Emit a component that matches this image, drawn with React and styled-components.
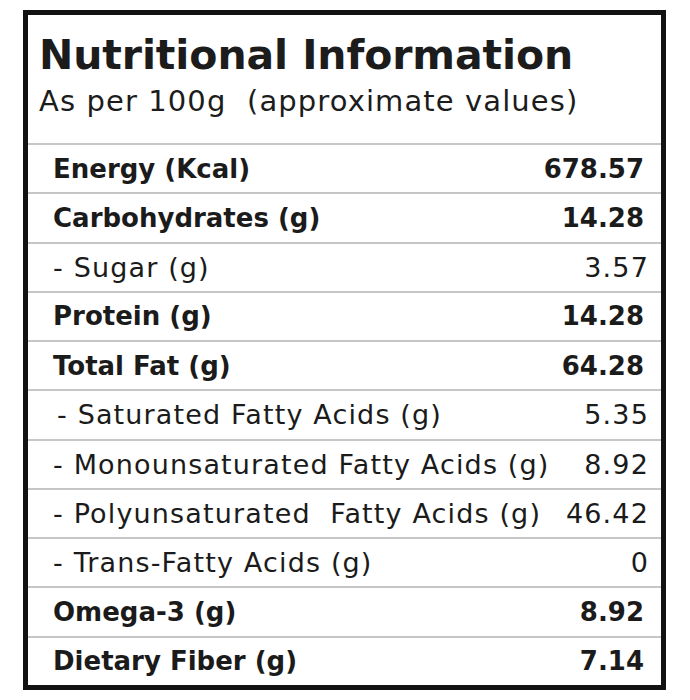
import React from "react";
import styled, { createGlobalStyle } from "styled-components";

const GlobalStyle = createGlobalStyle`
  html, body {
    margin: 0;
    padding: 0;
    background: #ffffff;
  }
  body {
    font-family: "DejaVu Sans", "Liberation Sans", sans-serif;
    color: #1b1b1b;
  }
`;

const Page = styled.div`
  width: 690px;
  height: 700px;
  padding: 10px 0 0 23px;
  box-sizing: border-box;
`;

const Card = styled.section`
  width: 643px;
  height: 680px;
  box-sizing: border-box;
  border: 5px solid #121212;
  display: flex;
  flex-direction: column;
`;

const Header = styled.header`
  height: 128px;
  box-sizing: border-box;
  padding: 19px 0 0 11px;
`;

const Title = styled.h1`
  margin: 0;
  font-size: 41px;
  line-height: 42px;
  font-weight: 700;
  letter-spacing: -0.1px;
  color: #1c1c1c;
`;

const Subtitle = styled.p`
  margin: 9px 0 0;
  font-size: 29px;
  line-height: 32px;
  font-weight: 400;
  letter-spacing: 1.1px;
  white-space: pre;
  color: #1c1c1c;
`;

const Row = styled.div`
  flex: 1;
  display: flex;
  align-items: center;
  justify-content: space-between;
  border-top: 2px solid #c6c6c6;
  padding: 0 ${(props) => (props.$sub ? "13px" : "17px")} 0
    ${(props) => 25 + (props.$indent || 0)}px;
  font-size: ${(props) => (props.$sub ? "27px" : "26px")};
  font-weight: ${(props) => (props.$sub ? 400 : 700)};
  letter-spacing: ${(props) => (props.$sub ? "1.15px" : "0")};
  color: #1b1b1b;
`;

const Label = styled.span`
  white-space: pre;
`;

const Value = styled.span`
  margin-right: ${(props) => (props.$sub ? "-1px" : "0")};
`;

const rows = [
  { label: "Energy (Kcal)", value: "678.57" },
  { label: "Carbohydrates (g)", value: "14.28" },
  { label: "- Sugar (g)", value: "3.57", sub: true },
  { label: "Protein (g)", value: "14.28" },
  { label: "Total Fat (g)", value: "64.28" },
  { label: "- Saturated Fatty Acids (g)", value: "5.35", sub: true, indent: 4 },
  { label: "- Monounsaturated Fatty Acids (g)", value: "8.92", sub: true },
  { label: "- Polyunsaturated  Fatty Acids (g)", value: "46.42", sub: true },
  { label: "- Trans-Fatty Acids (g)", value: "0", sub: true },
  { label: "Omega-3 (g)", value: "8.92" },
  { label: "Dietary Fiber (g)", value: "7.14" },
];

export default function App() {
  return (
    <Page>
      <GlobalStyle />
      <Card aria-label="Nutritional Information">
        <Header>
          <Title>Nutritional Information</Title>
          <Subtitle>As per 100g  (approximate values)</Subtitle>
        </Header>
        {rows.map((row) => (
          <Row key={row.label} $sub={row.sub} $indent={row.indent}>
            <Label>{row.label}</Label>
            <Value $sub={row.sub}>{row.value}</Value>
          </Row>
        ))}
      </Card>
    </Page>
  );
}
